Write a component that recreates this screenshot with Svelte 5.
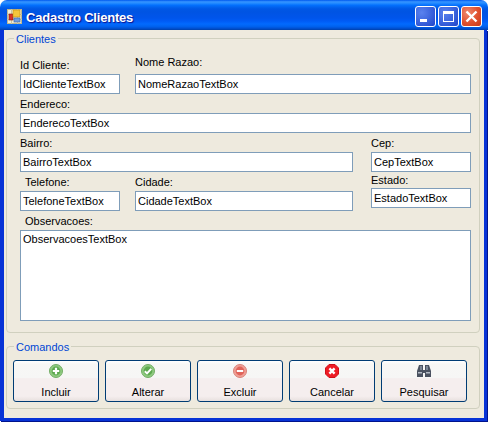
<script>
  const commands = ['Incluir', 'Alterar', 'Excluir', 'Cancelar', 'Pesquisar'];
</script>

<div class="window">
  <header class="titlebar">
    <svg class="app-icon" width="15" height="15" viewBox="0 0 15 15">
      <rect x="0.5" y="0.5" width="14" height="14" fill="#f0ecd6" stroke="#bdb88f" />
      <path d="M0 5.5H15M0 10.5H15M4.5 0V15M10.5 0V15" stroke="#c9c6a4" fill="none" />
      <rect x="2" y="5" width="4" height="6" fill="#d8322a" stroke="#8a1a10" stroke-width="0.6" />
      <rect x="6" y="1" width="7" height="7" fill="#f5c63c" stroke="#c08a10" stroke-width="0.6" />
      <rect x="7" y="9" width="6" height="4" fill="#6f9ee0" stroke="#3a62a8" stroke-width="0.6" />
    </svg>
    <span class="title">Cadastro Clientes</span>
    <div class="controls">
      <button class="ctl" aria-label="Minimizar"><i class="min"></i></button>
      <button class="ctl" aria-label="Maximizar"><i class="max"></i></button>
      <button class="ctl close" aria-label="Fechar">
        <svg width="13" height="13" viewBox="0 0 13 13"><path d="M1.5 1.5L11.5 11.5M11.5 1.5L1.5 11.5" stroke="#fff" stroke-width="2.4" /></svg>
      </button>
    </div>
  </header>

  <main class="body">
    <fieldset class="group clientes">
      <legend>Clientes</legend>

      <div class="row r1">
        <div class="field w-small">
          <label for="id">Id Cliente:</label>
          <input id="id" value="IdClienteTextBox" readonly />
        </div>
        <div class="field grow">
          <label for="nome" class="gap5">Nome Razao:</label>
          <input id="nome" value="NomeRazaoTextBox" readonly />
        </div>
      </div>

      <div class="row r2">
        <div class="field grow">
          <label for="endereco">Endereco:</label>
          <input id="endereco" value="EnderecoTextBox" readonly />
        </div>
      </div>

      <div class="row r3">
        <div class="field w-wide">
          <label for="bairro">Bairro:</label>
          <input id="bairro" value="BairroTextBox" readonly />
        </div>
        <div class="field w-small push">
          <label for="cep">Cep:</label>
          <input id="cep" value="CepTextBox" readonly />
        </div>
      </div>

      <div class="row r4">
        <div class="field w-small">
          <label for="telefone" class="indent">Telefone:</label>
          <input id="telefone" value="TelefoneTextBox" readonly />
        </div>
        <div class="field w-city">
          <label for="cidade">Cidade:</label>
          <input id="cidade" value="CidadeTextBox" readonly />
        </div>
        <div class="field w-small push lift">
          <label for="estado" class="tight">Estado:</label>
          <input id="estado" value="EstadoTextBox" readonly />
        </div>
      </div>

      <div class="row r5">
        <div class="field grow">
          <label for="obs" class="indent">Observacoes:</label>
          <textarea id="obs" readonly>ObservacoesTextBox</textarea>
        </div>
      </div>
    </fieldset>

    <fieldset class="group comandos">
      <legend>Comandos</legend>
      <div class="buttons">
        {#each commands as name}
          <button class="cmd">
            <span class="icon">
              {#if name === 'Incluir'}
                <svg width="16" height="16" viewBox="0 0 16 16">
                  <circle cx="8" cy="8" r="6.5" fill="#8fcb80" stroke="#73ad66" />
                  <circle cx="8" cy="8" r="4.4" fill="#5da84f" />
                  <path d="M8 4.8V11.2M4.8 8H11.2" stroke="#fff" stroke-width="2.2" />
                </svg>
              {:else if name === 'Alterar'}
                <svg width="16" height="16" viewBox="0 0 16 16">
                  <circle cx="8" cy="8" r="6.5" fill="#8fcb80" stroke="#73ad66" />
                  <circle cx="8" cy="8" r="4.4" fill="#5da84f" />
                  <path d="M4.8 8.2L7 10.4L11.2 5.8" stroke="#fff" stroke-width="2" fill="none" />
                </svg>
              {:else if name === 'Excluir'}
                <svg width="16" height="16" viewBox="0 0 16 16">
                  <circle cx="8" cy="8" r="6.5" fill="#f0a096" stroke="#d9837a" />
                  <circle cx="8" cy="8" r="4.4" fill="#e0645a" />
                  <path d="M4.8 8H11.2" stroke="#fff" stroke-width="2" />
                </svg>
              {:else if name === 'Cancelar'}
                <svg width="16" height="16" viewBox="0 0 16 16">
                  <path d="M5 1.5H11L14.5 5V11L11 14.5H5L1.5 11V5Z" fill="#ee1c25" stroke="#d01018" />
                  <path d="M5.4 5.4L10.6 10.6M10.6 5.4L5.4 10.6" stroke="#fff" stroke-width="2.4" />
                </svg>
              {:else}
                <svg width="16" height="16" viewBox="0 0 16 16">
                  <path d="M3 2H7V7H9V2H13L15 8V14H9V10H7V14H1V8Z" fill="#4a5260" />
                  <path d="M4 3H6V7H4ZM10 3H12V7H10Z" fill="#7d8796" />
                  <path d="M2 9H6V10.5H2ZM10 9H14V10.5H10Z" fill="#b4bbc5" />
                </svg>
              {/if}
            </span>
            <span class="cmd-label">{name}</span>
          </button>
        {/each}
      </div>
    </fieldset>
  </main>
</div>

<style>
  :global(body) {
    margin: 0;
    background: #fff;
  }

  .window {
    width: 488px;
    height: 422px;
    display: flex;
    flex-direction: column;
    box-sizing: border-box;
    font-family: "Liberation Sans", Arial, sans-serif;
    font-size: 11px;
    color: #000;
  }

  .titlebar {
    height: 30px;
    flex: none;
    display: flex;
    align-items: center;
    box-sizing: border-box;
    padding: 3px 6px 0 7px;
    border-radius: 7px 7px 0 0;
    background: linear-gradient(to bottom, #0058ee 0%, #3593ff 6%, #288eff 10%, #127dff 14%, #036ffc 18%, #0262ee 24%, #0057e5 30%, #0054e3 40%, #0055eb 60%, #005bf5 70%, #026afe 80%, #0062ef 88%, #0052d6 94%, #0040ab 100%);
  }

  .app-icon {
    flex: none;
  }

  .title {
    margin: 2px 0 0 4px;
    font-weight: 700;
    font-size: 13px;
    letter-spacing: -0.2px;
    color: #fff;
    text-shadow: 1px 1px 1px #0f1089;
  }

  .controls {
    margin-left: auto;
    display: flex;
    gap: 2px;
  }

  .ctl {
    width: 21px;
    height: 21px;
    padding: 0;
    box-sizing: border-box;
    display: flex;
    align-items: center;
    justify-content: center;
    position: relative;
    border: 1px solid #fff;
    border-radius: 3px;
    background: radial-gradient(circle at 30% 30%, #5a82ee 0%, #3a62dc 55%, #2044c8 100%);
  }

  .ctl.close {
    background: radial-gradient(circle at 30% 30%, #ee8a70 0%, #e0502e 55%, #c63a1a 100%);
  }

  .min {
    display: block;
    width: 7px;
    height: 3px;
    background: #fff;
    position: absolute;
    left: 4px;
    bottom: 4px;
  }

  .max {
    display: block;
    width: 11px;
    height: 11px;
    box-sizing: border-box;
    border: 1px solid #fff;
    border-top-width: 3px;
  }

  .body {
    flex: 1;
    min-height: 0;
    display: flex;
    flex-direction: column;
    box-sizing: border-box;
    padding: 1px 4px 0 2px;
    margin: 0 1px 1px 0;
    background: #eeeade;
    border-style: solid;
    border-color: #0733d6;
    border-width: 0 3px 3px 4px;
    box-shadow: 1px 1px 0 #00138c;
  }

  .group {
    margin: 0;
    padding: 0;
    border: 1px solid #d0d0bf;
    border-radius: 4px;
    min-width: 0;
    box-sizing: border-box;
  }

  legend {
    color: #0046d5;
    padding: 2px 2px 0;
    margin-left: 7px;
    line-height: 13px;
  }

  .clientes {
    height: 302px;
  }

  .comandos {
    margin-top: 6px;
    height: 70px;
  }

  .row {
    display: flex;
    align-items: flex-end;
    margin: 0 8px 0 13px;
  }

  .r1 { height: 48px; }
  .r2 { height: 39px; }
  .r3 { height: 39px; }
  .r4 { height: 39px; }
  .r5 { height: 110px; }

  .field {
    display: flex;
    flex-direction: column;
  }

  .grow { flex: 1; min-width: 0; }
  .w-small { width: 100px; margin-right: 15px; }
  .w-wide { width: 333px; }
  .w-city { width: 218px; }
  .push { margin-left: auto; margin-right: 0; }
  .lift { margin-bottom: 3px; }

  label {
    line-height: 13px;
    margin-bottom: 2px;
  }

  .gap5 { margin-bottom: 5px; }
  .indent { padding-left: 5px; }
  .tight { margin-bottom: 1px; }

  input, textarea {
    display: block;
    width: 100%;
    box-sizing: border-box;
    border: 1px solid #7f9db9;
    border-radius: 0;
    background: #fff;
    font: inherit;
    color: #000;
    margin: 0;
    outline: none;
  }

  input {
    height: 20px;
    padding: 0 2px;
  }

  textarea {
    height: 91px;
    padding: 2px;
    resize: none;
    overflow: hidden;
  }

  .buttons {
    display: flex;
    gap: 6px;
    padding: 6px 0 0 6px;
  }

  .cmd {
    width: 86px;
    height: 42px;
    padding: 0;
    box-sizing: border-box;
    display: flex;
    flex-direction: column;
    align-items: center;
    border: 1px solid #003c74;
    border-radius: 3px;
    font: inherit;
    color: #000;
    background: linear-gradient(to bottom, #fff 0%, #f7f7f5 8%, #f6f6f5 42%, #f5eeee 44%, #f5eeee 88%, #e8e0de 100%);
  }

  .icon {
    display: block;
    height: 16px;
    margin-top: 2px;
  }

  .cmd-label {
    margin-top: 7px;
    line-height: 13px;
  }
</style>
